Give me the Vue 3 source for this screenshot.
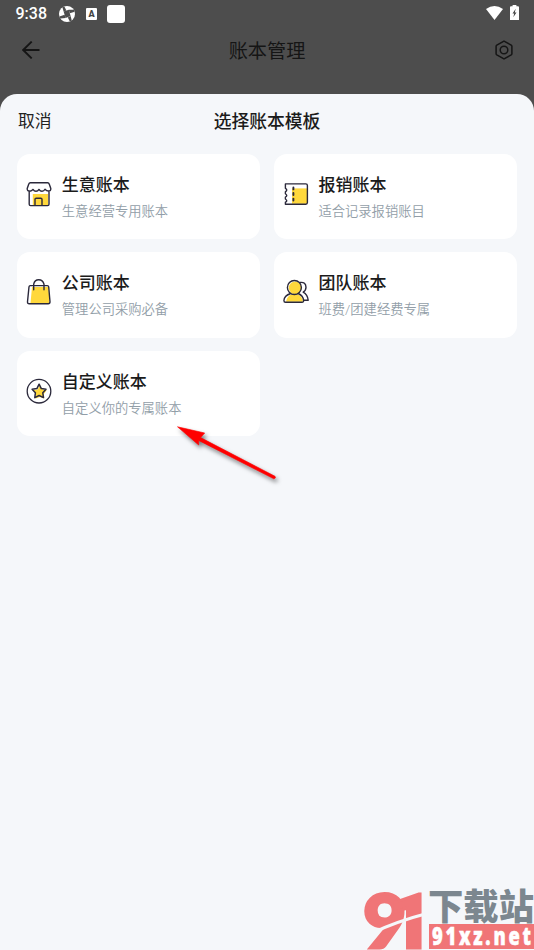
<script setup>
const templates = [
  { icon: 'shop', name: '生意账本', desc: '生意经营专用账本' },
  { icon: 'ticket', name: '报销账本', desc: '适合记录报销账目' },
  { icon: 'bag', name: '公司账本', desc: '管理公司采购必备' },
  { icon: 'team', name: '团队账本', desc: '班费/团建经费专属' },
  { icon: 'star', name: '自定义账本', desc: '自定义你的专属账本' },
]
</script>

<template>
  <div class="screen">
    <div class="status">
      <span class="time">9:38</span>
      <svg class="s-ball" viewBox="0 0 16 16">
        <circle cx="8" cy="8" r="8" fill="#fff" />
        <g fill="#4d4d4d">
          <path d="M4.6 5.6 9.8 3.8 11.6 10 6.6 12Z" />
          <path d="M4.6 5.6 7.4 4.6 5.4.4 3.4 1.2Z" />
          <path d="M9.8 3.8 10.8 7.2 15.7 5.8 14.8 3.8Z" />
          <path d="M11.6 10 8.8 11.4 10.8 15.6 12.8 14.6Z" />
          <path d="M6.6 12 5.6 8.8.4 10.4 1.4 12.6Z" />
        </g>
      </svg>
      <span class="s-a">A</span>
      <span class="s-square"></span>
      <span class="grow"></span>
      <svg class="s-wifi" viewBox="0 0 17 14"><path d="M0 3Q8.5-3 17 3L8.5 14Z" fill="#fff" /></svg>
      <svg class="s-batt" viewBox="0 0 9 15">
        <path d="M1 1.3H2.6V0H6.4V1.3H8Q9 1.3 9 2.3V15H0V2.3Q0 1.3 1 1.3Z" fill="#fff" />
        <path d="M5.7 3.8 2.5 8.5H4.2L3.3 12.3 6.5 7.4H4.8Z" fill="#444" />
      </svg>
    </div>

    <header class="nav">
      <svg class="back" viewBox="0 0 18 18"><path d="M9.7.6 1.2 9l8.5 8.4M1.2 9H17.5" fill="none" stroke="#151515" stroke-width="1.9" /></svg>
      <h1>账本管理</h1>
      <svg class="gear" viewBox="0 0 18 20">
        <path d="M9 1.2 16.2 5.1Q16.9 5.5 16.9 6.3V13.7Q16.9 14.5 16.2 14.9L9 18.8 1.8 14.9Q1.1 14.5 1.1 13.7V6.3Q1.1 5.5 1.8 5.1Z" fill="none" stroke="#151515" stroke-width="1.5" />
        <circle cx="9" cy="10" r="3.8" fill="none" stroke="#151515" stroke-width="1.5" />
      </svg>
    </header>

    <section class="sheet">
      <div class="sheet-head">
        <span class="cancel">取消</span>
        <h2>选择账本模板</h2>
        <span></span>
      </div>
      <div class="grid">
        <article v-for="t in templates" :key="t.icon" class="card">
          <svg class="icon" viewBox="0 0 26 26" fill="none" stroke="#2b293b" stroke-width="1.4" stroke-linecap="round" stroke-linejoin="round">
            <template v-if="t.icon === 'shop'">
              <path d="M6.8 13H22V24.2H6.8Z" fill="#ffd83c" stroke="none" />
              <path d="M3.2 10V23.2Q3.2 24.6 4.6 24.6H21.6Q23 24.6 23 23.2V10M4.4 1.8H21.6Q22.8 1.8 23.3 3.2L24.8 7.6Q25 10 22.5 10 20.5 10 19 8.2 17.9 10.3 16 10.3 14.2 10.3 13 8.4 11.8 10.3 10 10.3 8.2 10.3 7 8.4 5.8 10.2 3.8 10.2 1 10 1.2 7.6L2.7 3.2Q3.2 1.8 4.4 1.8ZM9 24.4V18.3Q9 17.2 10.2 17.2H14.8Q16 17.2 16 18.3V24.4" />
            </template>
            <template v-else-if="t.icon === 'ticket'">
              <path d="M9 7.4H24V22.8H9Z" fill="#ffd83c" stroke="none" />
              <path d="M2.4 2.9H22.8Q24.4 2.9 24.4 4.5V21.6Q24.4 23.2 22.8 23.2H2.4V21.2Q5.1 19.8 2.4 18V16Q5.1 14.6 2.4 12.7V10.8Q5.1 9 2.4 7.3Z" />
              <path d="M10.4 6.4V20.5" stroke-width="1.9" stroke-dasharray="2 3.6" />
            </template>
            <template v-else-if="t.icon === 'bag'">
              <path d="M6 8H22.5L23.5 24H4.5Z" fill="#ffd83c" stroke="none" />
              <path d="M4.2 6.6H21.3Q22.5 6.6 22.7 7.8L24 22.7Q24 24.7 22.2 24.7H3.2Q1.4 24.7 1.5 22.7L3 7.8Q3.2 6.6 4.2 6.6ZM7.7 10.8V5.2Q8.6.8 12.7.8T18 5.2V10.8" />
            </template>
            <template v-else-if="t.icon === 'team'">
              <path d="M17.2 3.4Q22.8 2.8 23 8.3 22.9 11.7 20.2 13.2 24.6 15.7 25.2 21.3H20.5" />
              <circle cx="12.1" cy="8.9" r="6.3" fill="#ffd83c" stroke="none" />
              <path d="M3 22.8Q4 17 8.3 15.4H15Q19.6 17.8 19.8 22.8Z" fill="#ffd83c" stroke="none" />
              <circle cx="11.4" cy="8.5" r="7" />
              <path d="M7.6 14.5Q1.3 16.7.9 21.5.9 23.3 2.5 23.3H19Q20.7 23.3 20.6 21.5 20.2 16.7 15.2 14.5" />
            </template>
            <template v-else>
              <circle cx="13" cy="13.2" r="11.8" stroke-width="1.3" />
              <path d="M14 7.2 16.4 11.5 20.7 12.3 17.8 15.9 18.3 20.5 14 19.1 9.5 20.5 10 15.9 7 12.3 11.7 11.5Z" fill="#ffd83c" stroke="none" />
              <path d="M13.1 6.2 15.3 10.6 20 11.3 16.8 14.8 17.5 19.6 13.1 17.5 8.8 19.6 9.4 14.8 6.1 11.3 10.9 10.6Z" stroke-width="1.5" />
            </template>
          </svg>
          <div class="copy">
            <h3>{{ t.name }}</h3>
            <p>{{ t.desc }}</p>
          </div>
        </article>
      </div>
    </section>

    <svg class="arrow" viewBox="0 0 112 66">
      <path d="M5.5 3.8 32.7 10 28.6 14.6 103 53.3Q104.4 55.2 101.8 55.8L26.6 17.4 26.7 22Z" fill="#fe0000" stroke="#fe0000" stroke-width=".6" />
    </svg>

    <div class="brand">
      <svg viewBox="0 0 172 62">
        <text y="60" fill="#f07577" stroke="#f07577" stroke-width="3" font-weight="900"><tspan x="1" font-family="Lato, sans-serif" font-size="75">9</tspan><tspan x="27" font-family="Roboto, sans-serif" font-size="76">1</tspan></text>
        <path d="M10 45Q36 33 65 25.5" fill="none" stroke="#f5f7fa" stroke-width="3" />
        <text x="66" y="32" font-family="Noto Sans CJK SC, sans-serif" font-weight="900" font-size="36" textLength="106" lengthAdjust="spacingAndGlyphs" fill="#7c878f">下载站</text>
        <path d="M67 36H172V61H67Z" fill="#f07577" />
        <text x="93.3" y="57" transform="scale(.75 1)" font-family="Open Sans, sans-serif" font-weight="800" font-size="24.5" textLength="132" lengthAdjust="spacing" fill="#fff" stroke="#fff" stroke-width=".5">91xz.net</text>
      </svg>
    </div>
  </div>
</template>

<style>
body {
  margin: 0;
  overflow: hidden;
}
</style>

<style scoped>
.screen {
  position: relative;
  display: flex;
  flex-direction: column;
  width: 534px;
  height: 950px;
  overflow: hidden;
  background: #4d4d4d;
  font-family: Roboto, "Noto Sans CJK SC", sans-serif;
}
h1, h2, h3, p {
  margin: 0;
}
.status {
  display: flex;
  align-items: center;
  height: 27px;
  padding: 0 15px;
  color: #fff;
}
.time {
  width: 44px;
  padding-left: 0.5px;
  box-sizing: border-box;
  font-size: 16px;
  font-weight: 500;
  line-height: 29px;
}
.s-ball {
  width: 16px;
  height: 16px;
}
.s-a {
  width: 11px;
  height: 12px;
  margin-left: 11px;
  border-radius: 1px;
  background: #fff;
  color: #444;
  font-size: 9px;
  font-weight: 900;
  line-height: 12px;
  text-align: center;
}
.s-square {
  width: 18px;
  height: 18px;
  margin-left: 10px;
  border-radius: 3px;
  background: #fff;
}
.grow {
  flex: 1;
}
.s-wifi {
  width: 17px;
  height: 14px;
  margin-right: 7px;
  margin-bottom: 1px;
}
.s-batt {
  width: 9px;
  height: 15px;
  margin-bottom: 2px;
}
.nav {
  display: flex;
  align-items: center;
  justify-content: space-between;
  height: 46px;
  margin-bottom: 20.6px;
  padding: 0 21px 0 22px;
}
.back {
  width: 18px;
  height: 18px;
}
h1 {
  padding: 3px 1px 0 0;
  color: #151515;
  font-size: 19.2px;
  font-weight: 400;
  line-height: 28px;
}
.gear {
  width: 18px;
  height: 20px;
}
.sheet {
  flex: 1;
  padding: 0 17px;
  border-radius: 17px 17px 0 0;
  background: #f5f7fa;
}
.sheet-head {
  display: grid;
  grid-template-columns: 1fr auto 1fr;
  align-items: center;
  height: 60.2px;
}
.cancel {
  height: 60px;
  padding-left: 1px;
  color: #222;
  font-size: 16.8px;
  line-height: 55px;
}
h2 {
  height: 60px;
  color: #1b1b1b;
  font-size: 17.8px;
  font-weight: 500;
  line-height: 55px;
}
.grid {
  display: grid;
  grid-template-columns: 1fr 1fr;
  grid-auto-rows: 85.3px;
  gap: 13.3px;
}
.card {
  display: flex;
  box-sizing: border-box;
  padding: 0 9px;
  border-radius: 13px;
  background: #fff;
}
.icon {
  width: 26px;
  height: 26px;
  margin: 27px 9.5px 0 0.3px;
}
.copy {
  padding-top: 19px;
}
h3 {
  color: #1b1b1b;
  font-size: 17px;
  font-weight: 500;
  line-height: 25px;
  white-space: nowrap;
}
p {
  margin-top: 4px;
  color: #929ea8;
  font-size: 13.3px;
  font-weight: 350;
  line-height: 20px;
  white-space: nowrap;
}
.arrow {
  position: absolute;
  left: 172px;
  top: 423px;
  width: 112px;
  height: 66px;
  filter: drop-shadow(2px 3px 2px rgba(0, 0, 0, 0.5));
}
.brand {
  position: absolute;
  right: 0;
  bottom: 0;
  width: 172px;
  height: 62px;
}
.brand svg {
  display: block;
  width: 172px;
  height: 62px;
  overflow: visible;
}
</style>
